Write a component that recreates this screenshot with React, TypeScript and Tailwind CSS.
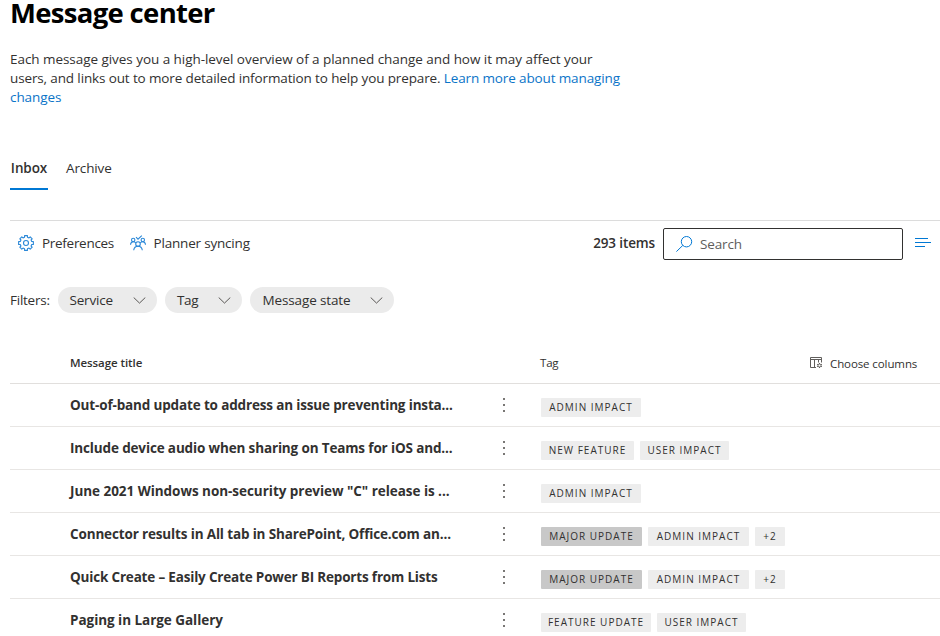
import React from 'react';

type Tone = 'light' | 'dark';
type Tag = { label: string; width: string; tone?: Tone };
type Message = { title: string; spacing: string; tags: Tag[] };

const ADMIN: Tag = { label: 'ADMIN IMPACT', width: 'w-[100px]' };
const USER: Tag = { label: 'USER IMPACT', width: 'w-[89px]' };
const MAJOR: Tag = { label: 'MAJOR UPDATE', width: 'w-[101px]', tone: 'dark' };
const ADMIN_WIDE: Tag = { label: 'ADMIN IMPACT', width: 'w-[101px]' };
const MORE: Tag = { label: '+2', width: 'w-[30px]' };

const messages: Message[] = [
  { title: 'Out-of-band update to address an issue preventing insta...', spacing: 'tracking-[-0.155px]', tags: [ADMIN] },
  { title: 'Include device audio when sharing on Teams for iOS and...', spacing: 'tracking-[-0.145px]', tags: [{ label: 'NEW FEATURE', width: 'w-[93px]' }, USER] },
  { title: 'June 2021 Windows non-security preview "C" release is ...', spacing: 'tracking-[-0.04px]', tags: [ADMIN] },
  { title: 'Connector results in All tab in SharePoint, Office.com an...', spacing: 'tracking-[-0.15px]', tags: [MAJOR, ADMIN_WIDE, MORE] },
  { title: 'Quick Create – Easily Create Power BI Reports from Lists', spacing: 'tracking-[-0.18px]', tags: [MAJOR, ADMIN_WIDE, MORE] },
  { title: 'Paging in Large Gallery', spacing: 'tracking-[-0.04px]', tags: [{ label: 'FEATURE UPDATE', width: 'w-[110px]' }, USER] },
];

function GearIcon() {
  const teeth = 8;
  const points: string[] = [];
  for (let i = 0; i < teeth; i++) {
    const a = (i * 2 * Math.PI) / teeth;
    const at = (r: number, d: number) =>
      `${(8 + r * Math.cos(a + d)).toFixed(2)} ${(8 + r * Math.sin(a + d)).toFixed(2)}`;
    points.push(at(5.9, -0.25), at(7.5, -0.19), at(7.5, 0.19), at(5.9, 0.25));
  }
  return (
    <svg className="h-4 w-4 shrink-0" viewBox="0 0 16 16" fill="none" stroke="#2b88d8" strokeWidth="1.1">
      <path d={`M${points.join('L')}Z`} strokeLinejoin="round" />
      <circle cx="8" cy="8" r="2.5" />
    </svg>
  );
}

function PlannerIcon() {
  return (
    <svg className="h-4 w-4 shrink-0" viewBox="0 0 16 16" fill="none" stroke="#2b88d8" strokeWidth="1.1">
      <path d="M6 2.2l2 2L11.800.6" />
      <circle cx="3.200" cy="5" r="1.700" />
      <circle cx="12.800" cy="5" r="1.700" />
      <circle cx="8" cy="9" r="2.300" />
      <path d="M.5 9.800C.6 8 1.700 6.700 3.300 6.700c1 0 1.800.5 2.500 1.300M15.500 9.800c-.1-1.800-1.200-3.100-2.800-3.100-1 0-1.800.5-2.500 1.300M3.700 15.300c.3-2.500 2-4 4.300-4s4 1.500 4.300 4" />
    </svg>
  );
}

function ColumnsIcon() {
  return (
    <svg className="h-3 w-[13px] shrink-0" viewBox="0 0 13 12" fill="none" stroke="#605e5c" strokeWidth="1">
      <path d="M6 10.500H.5V.5h11v5M.5 2.500h11M4.500 2.500v8M8.500 2.500v3" />
      <circle cx="9.500" cy="8.500" r="1.500" />
      <path d="M9.500 6v1M9.500 10v1M7 7.200l.9.500M12 7.200l-.9.500M7 9.800l.9-.5M12 9.800l-.9-.5" />
    </svg>
  );
}

function Chevron() {
  return (
    <svg className="h-[7px] w-[13px] shrink-0" viewBox="0 0 13 7" fill="none" stroke="#484644" strokeWidth="0.9">
      <path d="M.7.5l5.800 5.600L12.300.5" />
    </svg>
  );
}

function Pill({ label, size, spacing }: { label: string; size: string; spacing: string }) {
  return (
    <div className={`flex h-[26px] shrink-0 items-center justify-between rounded-full bg-[#ebebeb] pr-[11px] ${size}`}>
      <span className={`${spacing} whitespace-nowrap`}>{label}</span>
      <Chevron />
    </div>
  );
}

function TagBadge({ label, width, tone }: Tag) {
  return (
    <span
      className={`flex h-[19px] items-center justify-center rounded-[1px] text-[10px] leading-[19px] tracking-[1px] whitespace-nowrap ${width} ${
        tone === 'dark' ? 'bg-[#c8c8c8]' : 'bg-[#ededed]'
      }`}
    >
      {label}
    </span>
  );
}

function MoreDots() {
  return (
    <div className="flex flex-col gap-[4px] pt-[14px]">
      <span className="h-[2px] w-[2px] bg-[#797775]" />
      <span className="h-[2px] w-[2px] bg-[#797775]" />
      <span className="h-[2px] w-[2px] bg-[#797775]" />
    </div>
  );
}

export default function App() {
  return (
    <main className="h-[636px] w-[940px] overflow-hidden bg-white pl-[10px] font-['Open_Sans','Noto_Sans',sans-serif] text-[13.5px] leading-[19px] text-[#323130]">
      <h1 className="h-[50px] text-[27.5px] leading-[26px] font-bold tracking-[-0.68px] whitespace-nowrap text-black">
        Message center
      </h1>

      <p className="h-[108px] whitespace-nowrap">
        <span className="block tracking-[-0.05px]">
          Each message gives you a high-level overview of a planned change and how it may affect your
        </span>
        <span className="block tracking-[-0.13px]">
          users, and links out to more detailed information to help you prepare.{' '}
          <a className="text-[#0b74c8]">Learn more about managing</a>
        </span>
        <a className="block tracking-[-0.09px] text-[#0b74c8]">changes</a>
      </p>

      <nav className="flex h-[62px] items-start gap-[18px]">
        <div className="h-8 w-[38px] border-b-2 border-[#0078d4] pt-px text-center font-semibold tracking-[-0.1px]">Inbox</div>
        <div className="pt-px tracking-[-0.12px]">Archive</div>
      </nav>

      <section className="flex h-[67px] items-start border-t border-[#dcdcdc] pt-[7px]">
        <div className="flex h-[30px] w-[112px] items-center gap-2 pl-2">
          <GearIcon />
          <span className="tracking-[-0.29px] whitespace-nowrap">Preferences</span>
        </div>
        <div className="flex h-[30px] items-center gap-2 pl-[7.5px]">
          <PlannerIcon />
          <span className="tracking-[-0.19px] whitespace-nowrap">Planner syncing</span>
        </div>
        <div className="ml-auto flex h-8 items-center">
          <span className="pr-2 pb-0.5 font-semibold tracking-[-0.13px] whitespace-nowrap">293 items</span>
          <div className="flex h-8 w-[240px] items-center rounded-[2px] border border-[#323130] pl-3 tracking-[-0.15px] text-[#605e5c]">
            <svg className="mr-[7px] h-4 w-[17px]" viewBox="0 0 17 16" fill="none" stroke="#0078d4">
              <circle cx="10.500" cy="5.700" r="5.200" />
              <path d="M6.800 9.400L.4 15.600" />
            </svg>
            Search
          </div>
          <div className="mr-[9px] mb-[3px] ml-3 flex w-4 flex-col gap-[3px]">
            <span className="h-px w-[13px] bg-[#0078d4]" />
            <span className="h-px w-4 bg-[#0078d4]" />
            <span className="h-px w-[10px] bg-[#0078d4]" />
          </div>
        </div>
      </section>

      <section className="flex h-[55px] items-start gap-2">
        <span className="w-10 pt-1 tracking-[-0.25px] whitespace-nowrap">Filters:</span>
        <Pill label="Service" size="w-[99px] pl-[11.5px]" spacing="tracking-[-0.18px]" />
        <Pill label="Tag" size="w-[77px] pl-[12px]" spacing="tracking-[-0.4px]" />
        <Pill label="Message state" size="w-[144px] pl-[12.5px]" spacing="tracking-[-0.13px]" />
      </section>

      <section>
        <div className="flex h-[42px] items-center border-b border-[#e1dfdd] pl-[60px] text-[11.5px]">
          <span className="w-[470px] font-semibold tracking-[-0.08px]">Message title</span>
          <span className="w-[270px] tracking-[-0.2px]">Tag</span>
          <ColumnsIcon />
          <span className="pt-0.5 pl-[7px] tracking-[-0.1px] whitespace-nowrap">Choose columns</span>
        </div>
        {messages.map((m) => (
          <div key={m.title} className="flex h-[43px] border-b border-[#e8e6e4] pl-[60px]">
            <div className={`w-[433px] pt-[12px] font-bold whitespace-nowrap ${m.spacing}`}>{m.title}</div>
            <div className="w-[38px]">
              <MoreDots />
            </div>
            <div className="flex gap-[6px] pt-[14px]">
              {m.tags.map((t) => (
                <TagBadge key={t.label} {...t} />
              ))}
            </div>
          </div>
        ))}
      </section>
    </main>
  );
}
